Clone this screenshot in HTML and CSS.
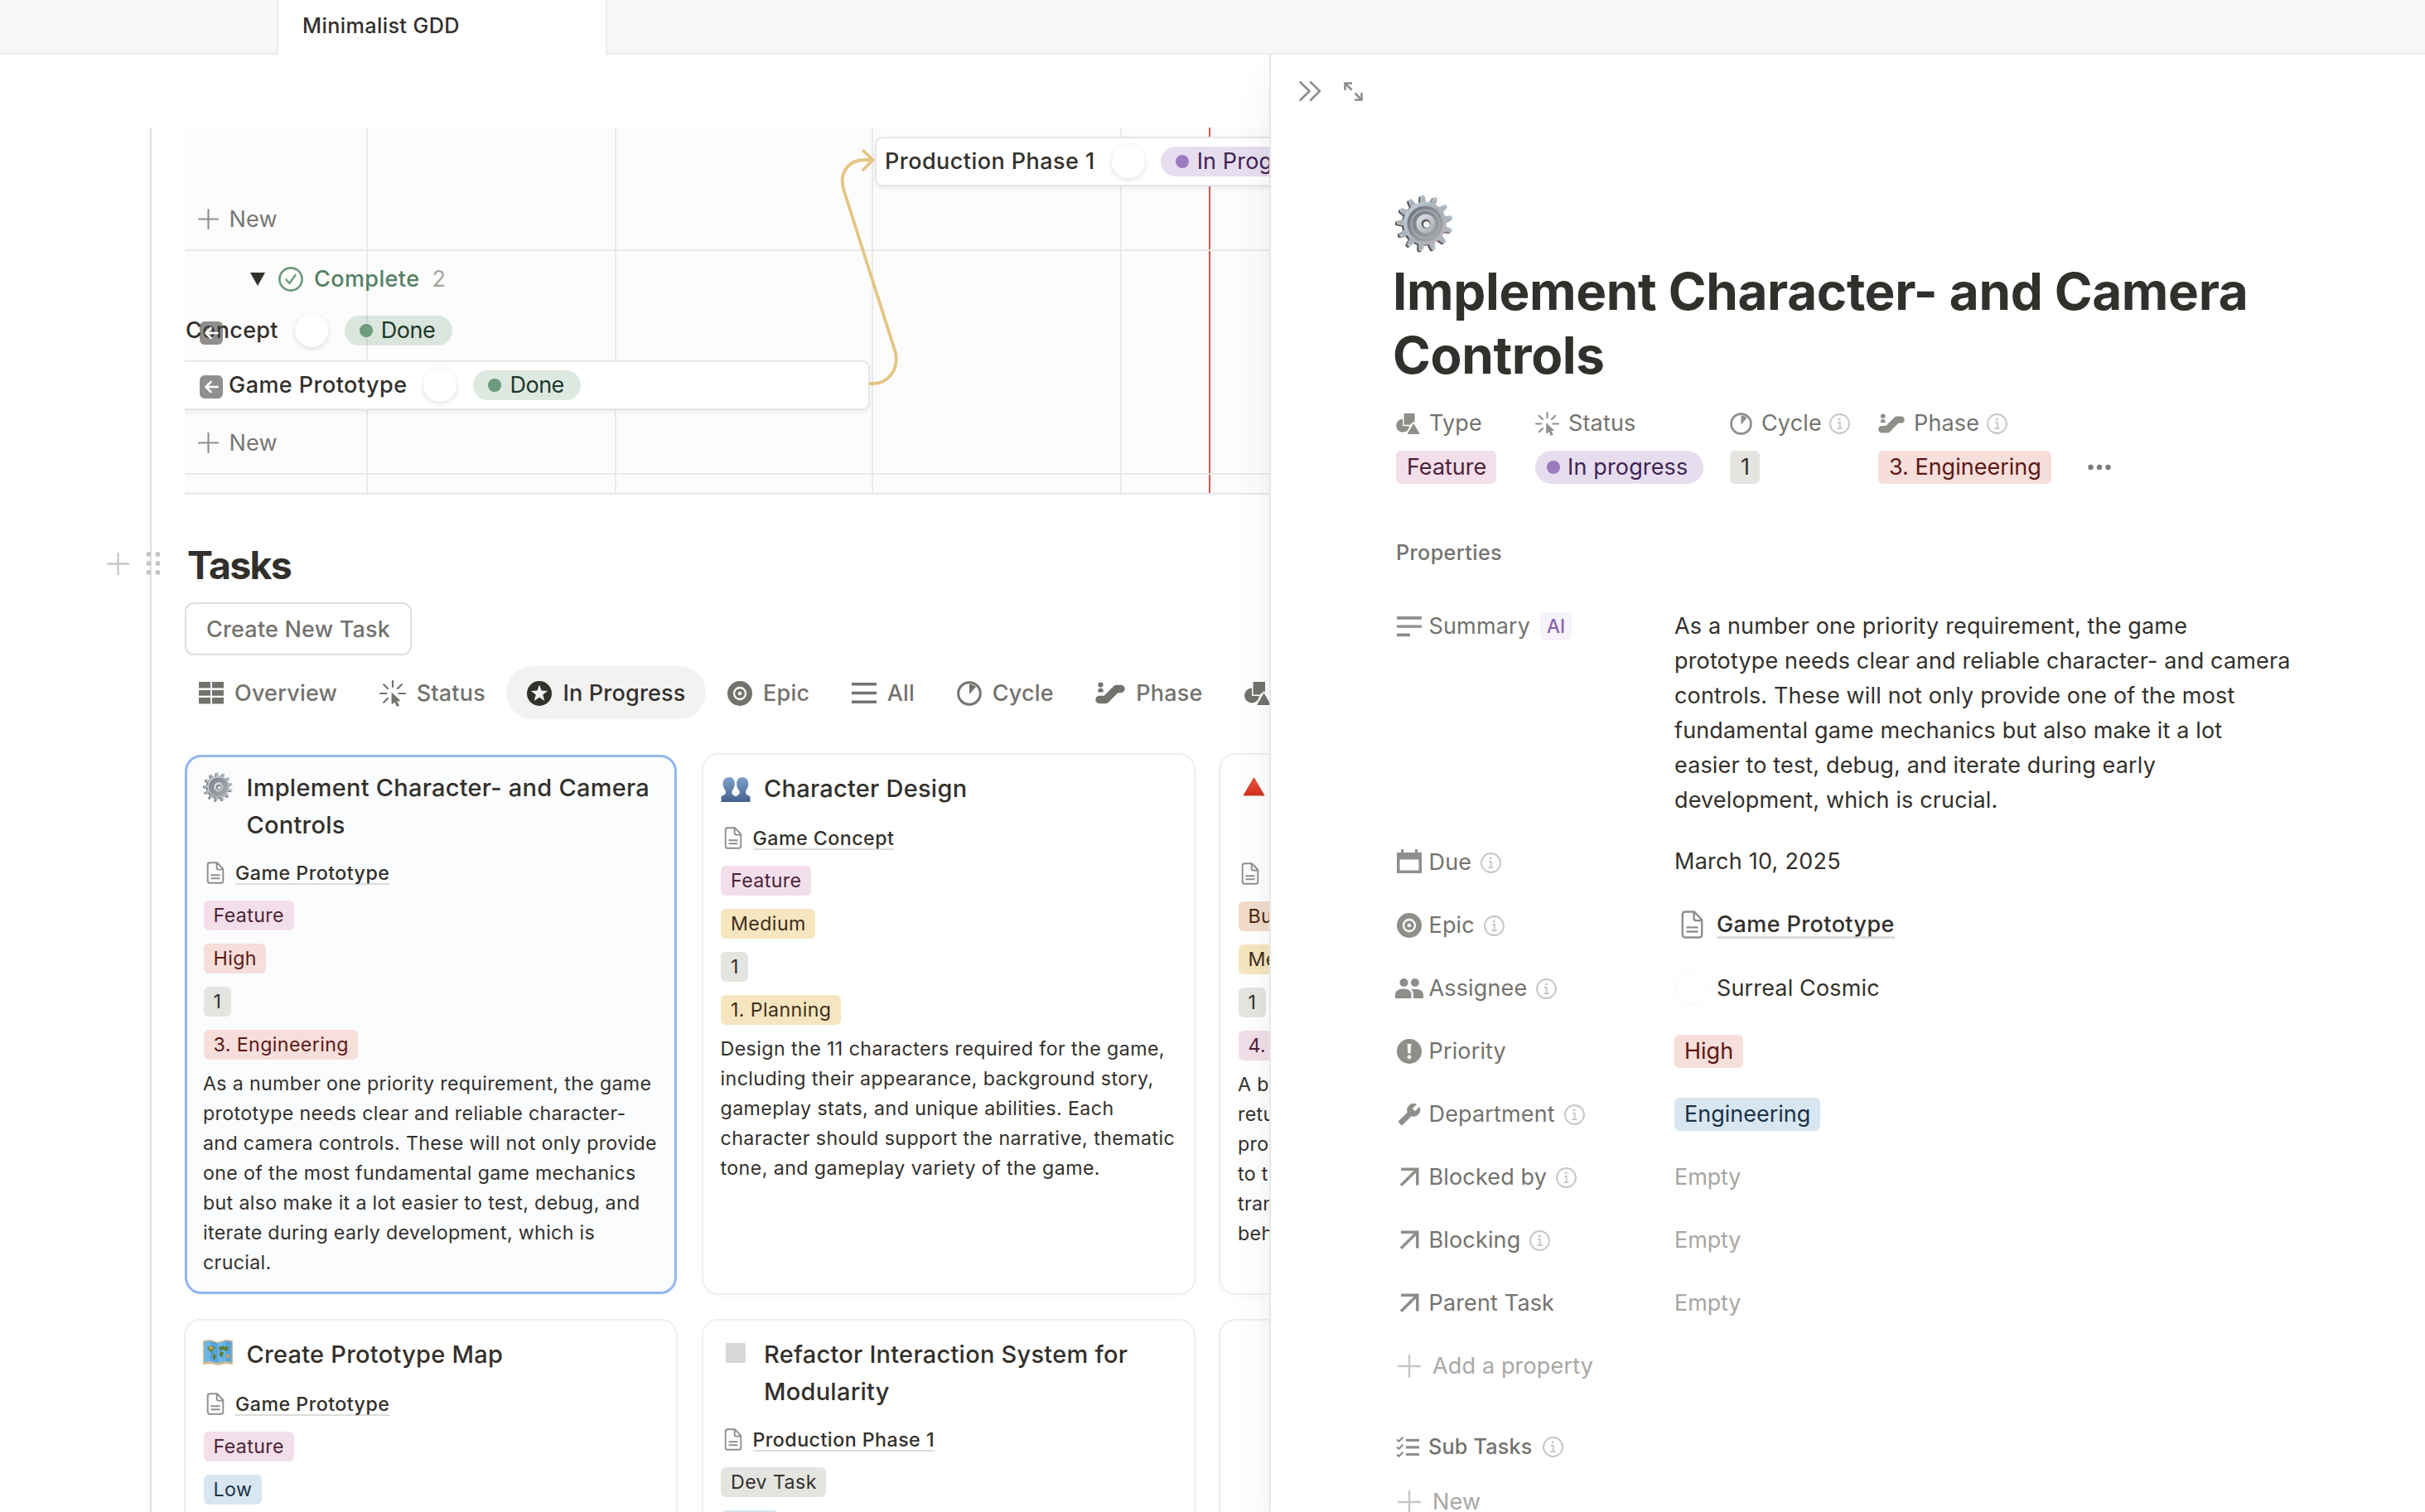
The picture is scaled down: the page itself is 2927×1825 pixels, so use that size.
FILE: index.html
```html
<!DOCTYPE html>
<html lang="en">
<head>
<meta charset="utf-8">
<title>Minimalist GDD</title>
<link rel="stylesheet" href="styles.css">
</head>
<body>
<svg class="sprite" aria-hidden="true">
  <defs>
    <linearGradient id="g-gear" x1="0" y1="0" x2="1" y2="1"><stop offset="0" stop-color="#c3d3e0"/><stop offset=".5" stop-color="#a9b2ba"/><stop offset="1" stop-color="#bdb4b9"/></linearGradient>
    <linearGradient id="g-ring" x1="0" y1="0" x2="1" y2="1"><stop offset="0" stop-color="#6c7178"/><stop offset="1" stop-color="#a9adb2"/></linearGradient>
    <linearGradient id="g-hub" x1="0" y1="0" x2="1" y2="1"><stop offset="0" stop-color="#e3e9ee"/><stop offset="1" stop-color="#9fa5ab"/></linearGradient>
    <linearGradient id="g-bust" x1="0" y1="0" x2="0" y2="1"><stop offset="0" stop-color="#7fa0cb"/><stop offset="1" stop-color="#44618e"/></linearGradient>
    <linearGradient id="g-tri" x1="0" y1="0" x2="0" y2="1"><stop offset="0" stop-color="#f0553c"/><stop offset="1" stop-color="#d32f1c"/></linearGradient>
    <path id="tooth" d="M31 12 L32.400 2.600 Q32.700 1 35 1 Q37.300 1 37.600 2.600 L39 12Z"/>
    <g id="teeth">
      <use href="#tooth"/><use href="#tooth" transform="rotate(27.7 35 35)"/><use href="#tooth" transform="rotate(55.4 35 35)"/><use href="#tooth" transform="rotate(83.1 35 35)"/><use href="#tooth" transform="rotate(110.8 35 35)"/><use href="#tooth" transform="rotate(138.5 35 35)"/><use href="#tooth" transform="rotate(166.2 35 35)"/><use href="#tooth" transform="rotate(193.8 35 35)"/><use href="#tooth" transform="rotate(221.5 35 35)"/><use href="#tooth" transform="rotate(249.2 35 35)"/><use href="#tooth" transform="rotate(276.9 35 35)"/><use href="#tooth" transform="rotate(304.6 35 35)"/><use href="#tooth" transform="rotate(332.3 35 35)"/>
      <circle cx="35" cy="35" r="26"/>
    </g>
  </defs>
  <symbol id="gear" viewBox="0 0 70 70">
    <use href="#teeth" fill="#5f5a58" transform="translate(-1.2 .8) rotate(-5 35 35)"/>
    <use href="#teeth" fill="url(#g-gear)" transform="translate(.8 -.4) rotate(-5 35 35)"/>
    <circle cx="36" cy="35" r="21.5" fill="url(#g-ring)"/>
    <circle cx="36.5" cy="35.500" r="17" fill="none" stroke="#a4a9af" stroke-width="2"/>
    <circle cx="37" cy="35" r="11.500" fill="url(#g-hub)"/>
    <circle cx="37" cy="35" r="5.500" fill="#665f5a"/><circle cx="38" cy="36" r="3.800" fill="#f4f5f6"/>
  </symbol>
  <symbol id="busts" viewBox="0 0 35 30"><path fill="url(#g-bust)" d="M9.500 0C14 0 16.500 3.500 16.300 8.500C16.200 12 15 14 13.500 16C12 19 13 21 16 22.500L17.500 23.500L19 22.500C22 21 23 19 21.500 16C20 14 18.800 12 18.700 8.500C18.500 3.500 21 0 25.500 0C30 0 33 3.500 32.800 8.500C32.700 12 31.500 14 30 16C28.500 19 30 21.500 35 23V30H0V23C5 21.500 6.500 19 5 16C3.500 14 2.300 12 2.200 8.500C2 3.500 5 0 9.500 0Z"/></symbol>
  <symbol id="redtri" viewBox="0 0 27 23"><path d="M13.500 1L26 22H1Z" fill="url(#g-tri)" stroke="#c93a2a" stroke-width="1" stroke-linejoin="round"/></symbol>
  <symbol id="map" viewBox="0 0 36 31">
    <path d="M0 1L9 0L18 3L27 0L36 1V30L27 29L18 31L9 29L0 30Z" fill="#cdbb92"/>
    <path d="M1.500 2.500L9 1.500L18 4.500L27 1.500L34.500 2.500V27L27 26L18 28L9 26L1.500 27Z" fill="#6bb6e8"/>
    <path d="M9 1.500L18 4.500V28L9 26ZM27 1.500L34.500 2.500V27L27 26Z" fill="#4590cd" opacity=".5"/>
    <path d="M5 9L10 7.500L15 9L13 12L11 13.500L12 16L9 15L6 11ZM12 17L16 19L14 25L12 22ZM19 9L24 7.500L31 9L30 13L27 14L25 12L20 13ZM20 14L25 15L23 22L20 19Z" fill="#5d7f3a"/>
    <circle cx="30" cy="20" r="2" fill="#e6a23c"/><path d="M7 8.500h5v3H8z" fill="#d8b14a"/>
  </symbol>
  <symbol id="graysq" viewBox="0 0 24 24"><rect width="24" height="24" rx="1.500" fill="#d8d8d8"/></symbol>
  <symbol id="table" viewBox="0 0 30 27"><path fill="currentColor" d="M0 0h14v7.600H0zM16 0h14v7.600H16zM0 9.900h14v6.800H0zM16 9.900h14v6.800H16zM0 19h14v7.600H0zM16 19h14v7.600H16z"/></symbol>
  <symbol id="status" viewBox="0 0 32 32">
    <path d="M16 1v7M1 16h7.500M23.500 16H31M5.200 5.200l4.800 4.800M26.800 5.200L22 10M5.200 26.800L10 22" stroke="currentColor" stroke-width="2.200" fill="none" stroke-linecap="round"/>
    <path fill="currentColor" d="M14.600 14.500L25.500 25L21.300 25.400L24 30.500L21 32L18.500 26.800L14.600 29.500Z"/>
  </symbol>
  <symbol id="star" viewBox="0 0 30 30"><circle cx="15" cy="15" r="15" fill="currentColor"/><path fill="#f2f2f1" d="M15 4.500L17.600 11.600L25.200 11.900L19.200 16.600L21.300 23.900L15 19.700L8.700 23.900L10.800 16.600L4.800 11.900L12.400 11.600Z"/></symbol>
  <symbol id="epic" viewBox="0 0 30 30"><circle cx="15" cy="15" r="15" fill="currentColor"/><circle cx="15" cy="15" r="7" fill="none" stroke="#fff" stroke-width="2.300"/><circle cx="15" cy="15" r="2.300" fill="#fff"/></symbol>
  <symbol id="lines" viewBox="0 0 30 25"><path fill="currentColor" d="M0 0h30v3.400H0zM0 10.800h30v3.400H0zM0 21.600h30V25H0z"/></symbol>
  <symbol id="cycle" viewBox="0 0 30 30"><circle cx="15" cy="15" r="13.300" fill="none" stroke="currentColor" stroke-width="3"/><path fill="currentColor" d="M15 16V3.500Q20 4 23 7Z"/></symbol>
  <symbol id="phase" viewBox="0 0 36 28"><circle cx="6.500" cy="3.500" r="3.100" fill="currentColor"/><path fill="currentColor" d="M3.300 12.500V11a3.200 3.200 0 0 1 6.400 0v1.500z"/><path d="M5 21.500H12.500L25.500 8.500H31" stroke="currentColor" stroke-width="9.500" stroke-linecap="round" stroke-linejoin="round" fill="none"/></symbol>
  <symbol id="shapes" viewBox="0 0 32 28"><circle cx="9" cy="16.500" r="9" fill="currentColor"/><path fill="#fff" d="M9 0H27V17H9ZM13 28L23.500 9L34 28Z"/><path fill="currentColor" d="M10.500 0H25V12.200L23.600 11.200L18.700 15.500H10.500ZM23.500 13.500L31.500 27Q31.800 28 31 28H16Q15.200 28 15.500 27Z"/></symbol>
  <symbol id="doc" viewBox="0 0 21 27"><path d="M4 1.200H12.500L19.800 9V23.300Q19.800 25.800 17.300 25.800H4Q1.200 25.800 1.200 23.300V3.700Q1.200 1.200 4 1.200ZM12.200 1.500V7.500Q12.200 9.600 14.200 9.600H19.500M5.800 16.200H15.200M5.800 20.300H15.200" fill="none" stroke="currentColor" stroke-width="1.900" stroke-linejoin="round" stroke-linecap="round"/></symbol>
  <symbol id="plus" viewBox="0 0 26 26"><path d="M13 1v24M1 13h24" stroke="currentColor" stroke-width="2.200" stroke-linecap="round"/></symbol>
  <symbol id="info" viewBox="0 0 24 24"><circle cx="12" cy="12" r="11" fill="none" stroke="currentColor" stroke-width="1.800"/><circle cx="11.800" cy="6.700" r="1.400" fill="currentColor"/><path d="M9.500 10.500h2.800V17M9 17.300h6" stroke="currentColor" stroke-width="1.700" fill="none"/></symbol>
  <symbol id="text" viewBox="0 0 30 25"><path fill="currentColor" d="M0 0h30v3.800H0zM0 10.400h30v3.400H0zM0 20.400h16v3.800H0z"/></symbol>
  <symbol id="cal" viewBox="0 0 30 29"><path fill="currentColor" fill-rule="evenodd" d="M5 0h3v4h14V0h3v4h5v25H0V4h5zM3.500 12.500v13h23v-13z"/></symbol>
  <symbol id="people" viewBox="0 0 34 24"><path fill="currentColor" d="M10.500 0a5 5 0 1 1 0 10a5 5 0 1 1 0-10M24 0a5 5 0 1 1 0 10a5 5 0 1 1 0-10M0 24V20Q0 12.500 10 12.500T19.500 20V24ZM22 24V19.500Q21.800 15.500 19.500 13Q34 11.500 34 20V24Z"/></symbol>
  <symbol id="alert" viewBox="0 0 30 30"><circle cx="15" cy="15" r="15" fill="currentColor"/><path fill="#fff" d="M12.700 6h4.600l-.7 11.500h-3.200zM15 19.500a2.400 2.400 0 1 1 0 4.800a2.400 2.400 0 1 1 0-4.800"/></symbol>
  <symbol id="wrench" viewBox="0 0 24 24"><path fill="currentColor" transform="matrix(-1 0 0 1 24 0)" stroke="currentColor" stroke-width=".8" stroke-linejoin="round" d="M22.700 19l-9.100-9.100c.9-2.300.4-5-1.500-6.900-2-2-5-2.400-7.400-1.300L9 6 6 9 1.600 4.700C.4 7.100.9 10.100 2.900 12.100c1.900 1.900 4.600 2.400 6.900 1.500l9.100 9.100c.4.400 1 .4 1.400 0l2.300-2.300c.5-.4.5-1.100.1-1.400z"/></symbol>
  <symbol id="arrow" viewBox="0 0 24 24"><path d="M2 2.200H21.800V21.500M21 3L2 21.800" fill="none" stroke="currentColor" stroke-width="3.600"/></symbol>
  <symbol id="checks" viewBox="0 0 28 25"><path d="M1 3.500l2.500 2.300L8.500 .8M1 12.500l2.500 2.300L8.500 9.800M1 21.500l2.500 2.300L8.500 18.800" fill="none" stroke="currentColor" stroke-width="2.200"/><path d="M12 4.300h16M12 12.800h16M12 21.500h16" stroke="currentColor" stroke-width="3.200"/></symbol>
  <symbol id="back" viewBox="0 0 28 28"><path d="M21.500 14H7.500M13.500 8L7.500 14L13.500 20" stroke="#fff" stroke-width="2.600" fill="none" stroke-linecap="round" stroke-linejoin="round"/></symbol>
</svg>

<header class="topbar">
  <div class="topbar-start"></div>
  <div class="topbar-tab">Minimalist GDD</div>
  <div class="topbar-end"></div>
</header>

<div class="workspace">
  <main class="page">
    <div class="column">
      <section class="timeline">
        <div class="gridline gl-1"></div><div class="gridline gl-2"></div><div class="gridline gl-3"></div><div class="gridline gl-4"></div>
        <div class="gridline today"></div>
        <div class="lane lane-first">
          <div class="track"></div>
          <div class="new-row"><svg class="i-plus"><use href="#plus"/></svg>New</div>
        </div>
        <div class="lane">
          <div class="lane-head">
            <svg class="i-toggle" viewBox="0 0 18 16"><path d="M0 0H18L9 16Z" fill="#32302c"/></svg>
            <svg class="i-check" viewBox="0 0 30 30"><circle cx="15" cy="15" r="13.600" fill="none" stroke="#6c9b7d" stroke-width="2.700"/><path d="M9.500 15.500L13.500 20L20.500 10" fill="none" stroke="#6c9b7d" stroke-width="2.400" stroke-linecap="round" stroke-linejoin="round"/></svg>
            <span class="lane-name">Complete</span><span class="lane-count">2</span>
          </div>
          <div class="track track-two"></div>
          <div class="new-row"><svg class="i-plus"><use href="#plus"/></svg>New</div>
        </div>
        <div class="lane-tail"></div>

        <div class="bar bar-production"><span class="bar-name">Production Phase 1</span><i class="avatar"></i><span class="pill purple"><i></i>In Progress</span></div>
        <div class="bar bar-concept"><span class="bar-name">Concept</span><i class="avatar"></i><span class="pill green"><i></i>Done</span><span class="jump"><svg><use href="#back"/></svg></span></div>
        <div class="bar bar-prototype"><span class="bar-name">Game Prototype</span><i class="avatar"></i><span class="pill green"><i></i>Done</span><span class="jump"><svg><use href="#back"/></svg></span></div>
        <svg class="link-arrow" viewBox="0 0 80 300"><path d="M38 289H43C60 289 74 273 70 252L8 57C1 37 11 19 33 19H42M30 7L42.500 19L30 32" fill="none" stroke="#e5c585" stroke-width="3.800"/></svg>
      </section>

      <div class="heading-row">
        <div class="handle"><svg class="i-add"><use href="#plus"/></svg><svg class="i-drag" viewBox="0 0 18 28"><g fill="#c6c5c1"><circle cx="3.500" cy="3" r="2.900"/><circle cx="14.500" cy="3" r="2.900"/><circle cx="3.500" cy="14" r="2.900"/><circle cx="14.500" cy="14" r="2.900"/><circle cx="3.500" cy="25" r="2.900"/><circle cx="14.500" cy="25" r="2.900"/></g></svg></div>
        <h2>Tasks</h2>
      </div>
      <button class="create">Create New Task</button>

      <nav class="tabs">
        <a class="tab"><svg class="w30 h27"><use href="#table"/></svg>Overview</a>
        <a class="tab"><svg class="w32 h32"><use href="#status"/></svg>Status</a>
        <a class="tab active"><svg class="w30 h30"><use href="#star"/></svg>In Progress</a>
        <a class="tab"><svg class="w30 h30"><use href="#epic"/></svg>Epic</a>
        <a class="tab"><svg class="w30 h25"><use href="#lines"/></svg>All</a>
        <a class="tab"><svg class="w30 h30"><use href="#cycle"/></svg>Cycle</a>
        <a class="tab"><svg class="w36 h28"><use href="#phase"/></svg>Phase</a>
        <a class="tab"><svg class="w32 h28"><use href="#shapes"/></svg></a>
      </nav>

      <section class="gallery">
        <article class="card selected">
          <h3><svg class="e35"><use href="#gear"/></svg><span>Implement Character- and Camera Controls</span></h3>
          <div class="ref"><svg><use href="#doc"/></svg><a>Game Prototype</a></div>
          <span class="tag pink">Feature</span><span class="tag red">High</span><span class="tag gray">1</span><span class="tag red">3. Engineering</span>
          <p>As a number one priority requirement, the game<br>prototype needs clear and reliable character-<br>and camera controls. These will not only provide<br>one of the most fundamental game mechanics<br>but also make it a lot easier to test, debug, and<br>iterate during early development, which is<br>crucial.</p>
        </article>
        <article class="card">
          <h3><svg class="e-bust"><use href="#busts"/></svg><span>Character Design</span></h3>
          <div class="ref"><svg><use href="#doc"/></svg><a>Game Concept</a></div>
          <span class="tag pink">Feature</span><span class="tag yellow">Medium</span><span class="tag gray">1</span><span class="tag yellow">1. Planning</span>
          <p class="p-wide">Design the 11 characters required for the game,<br>including their appearance, background story,<br>gameplay stats, and unique abilities. Each<br>character should support the narrative, thematic<br>tone, and gameplay variety of the game.</p>
        </article>
        <article class="card tall">
          <h3><svg class="e-tri"><use href="#redtri"/></svg></h3>
          <div class="ref"><svg><use href="#doc"/></svg></div>
          <span class="tag orange">Bug</span><span class="tag yellow">Medium</span><span class="tag gray">1</span><span class="tag pink">4. Testing</span>
          <p>A b<br>retu<br>pro<br>to t<br>tran<br>beh</p>
        </article>
        <article class="card">
          <h3><svg class="e-map"><use href="#map"/></svg><span>Create Prototype Map</span></h3>
          <div class="ref"><svg><use href="#doc"/></svg><a>Game Prototype</a></div>
          <span class="tag pink">Feature</span><span class="tag blue">Low</span>
        </article>
        <article class="card">
          <h3><svg class="e-sq"><use href="#graysq"/></svg><span>Refactor Interaction System for Modularity</span></h3>
          <div class="ref"><svg><use href="#doc"/></svg><a>Production Phase 1</a></div>
          <span class="tag gray">Dev Task</span><span class="tag blue">Low</span>
        </article>
        <article class="card"></article>
      </section>
    </div>
  </main>

  <aside class="peek">
    <div class="peek-bar">
      <svg class="i-close" viewBox="0 0 27 24"><path d="M1.500 1.200L12.500 12L1.500 22.800M14 1.200L25 12L14 22.800" fill="none" stroke="#8f8e8b" stroke-width="2.600" stroke-linecap="round" stroke-linejoin="round"/></svg>
      <svg class="i-expand" viewBox="0 0 23 23"><path d="M10 1.500H1.500V10M1.500 1.500L9.500 9.500M13 21.500H21.500V13M21.500 21.500L13.500 13.500" fill="none" stroke="#8f8e8b" stroke-width="2.600"/></svg>
    </div>
    <div class="peek-body">
      <svg class="page-icon"><use href="#gear"/></svg>
      <h1>Implement Character- and Camera Controls</h1>

      <div class="pinned">
        <div class="pin"><div class="pin-label"><svg class="w29 h25"><use href="#shapes"/></svg><span>Type</span></div><div><span class="chip pink">Feature</span></div></div>
        <div class="pin"><div class="pin-label"><svg class="w29 h29"><use href="#status"/></svg><span>Status</span></div><div><span class="pill purple big"><i></i>In progress</span></div></div>
        <div class="pin"><div class="pin-label"><svg class="w27 h27"><use href="#cycle"/></svg><span>Cycle</span><svg class="i-info"><use href="#info"/></svg></div><div><span class="chip gray">1</span></div></div>
        <div class="pin"><div class="pin-label"><svg class="w32 h25"><use href="#phase"/></svg><span>Phase</span><svg class="i-info"><use href="#info"/></svg></div><div><span class="chip red">3. Engineering</span><svg class="i-more" viewBox="0 0 28 8"><g fill="#7d7c78"><circle cx="3.500" cy="4" r="3.200"/><circle cx="14" cy="4" r="3.200"/><circle cx="24.500" cy="4" r="3.200"/></g></svg></div></div>
      </div>

      <div class="section-label">Properties</div>

      <div class="prop prop-summary">
        <div class="name"><i><svg class="w30 h25"><use href="#text"/></svg></i>Summary<b class="ai">AI</b></div>
        <div class="value">As a number one priority requirement, the game<br>prototype needs clear and reliable character- and camera<br>controls. These will not only provide one of the most<br>fundamental game mechanics but also make it a lot<br>easier to test, debug, and iterate during early<br>development, which is crucial.</div>
      </div>
      <div class="prop"><div class="name"><i><svg class="w30 h29 i-cal"><use href="#cal"/></svg></i>Due<svg class="i-info"><use href="#info"/></svg></div><div class="value value-date">March 10, 2025</div></div>
      <div class="prop"><div class="name"><i><svg class="w30 h30"><use href="#epic"/></svg></i>Epic<svg class="i-info"><use href="#info"/></svg></div><div class="value value-ref"><svg class="i-page"><use href="#doc"/></svg><a>Game Prototype</a></div></div>
      <div class="prop"><div class="name"><i><svg class="w34 h24"><use href="#people"/></svg></i>Assignee<svg class="i-info"><use href="#info"/></svg></div><div class="value"><em class="person"></em>Surreal Cosmic</div></div>
      <div class="prop"><div class="name"><i><svg class="w30 h30"><use href="#alert"/></svg></i>Priority</div><div class="value"><span class="chip red">High</span></div></div>
      <div class="prop"><div class="name"><i><svg class="w28 h28"><use href="#wrench"/></svg></i>Department<svg class="i-info"><use href="#info"/></svg></div><div class="value"><span class="chip blue">Engineering</span></div></div>
      <div class="prop"><div class="name"><i><svg class="w24 h24"><use href="#arrow"/></svg></i>Blocked by<svg class="i-info"><use href="#info"/></svg></div><div class="value empty">Empty</div></div>
      <div class="prop"><div class="name"><i><svg class="w24 h24"><use href="#arrow"/></svg></i>Blocking<svg class="i-info"><use href="#info"/></svg></div><div class="value empty">Empty</div></div>
      <div class="prop"><div class="name"><i><svg class="w24 h24"><use href="#arrow"/></svg></i>Parent Task</div><div class="value empty">Empty</div></div>
      <div class="add"><svg class="i-faint"><use href="#plus"/></svg>Add a property</div>
      <div class="sub-tasks"><i><svg class="w28 h25"><use href="#checks"/></svg></i>Sub Tasks<svg class="i-info"><use href="#info"/></svg></div>
      <div class="add add-sub"><svg class="i-faint"><use href="#plus"/></svg>New</div>
    </div>
  </aside>
</div>
</body>
</html>
```
FILE: styles.css
```css
* { box-sizing: border-box; }
html, body { margin: 0; height: 100%; overflow: hidden; }
body {
  display: flex;
  flex-direction: column;
  background: #fff;
  color: #32302c;
  font: 400 27px/36px Inter, "Liberation Sans", sans-serif;
  letter-spacing: .15px;
}
i, em { font-style: normal; }
svg { display: block; flex: none; overflow: visible; }
.sprite { position: absolute; width: 0; height: 0; }

.w24 { width: 24px; } .w27 { width: 27px; } .w28 { width: 28px; } .w29 { width: 29px; } .w30 { width: 30px; }
.w32 { width: 32px; } .w34 { width: 34px; } .w36 { width: 36px; }
.h24 { height: 24px; } .h25 { height: 25px; } .h27 { height: 27px; } .h28 { height: 28px; } .h29 { height: 29px; }
.h30 { height: 30px; } .h32 { height: 32px; }

/* Top bar */
.topbar { display: flex; height: 66px; flex: none; position: relative; z-index: 3; }
.topbar-start { width: 334px; }
.topbar-end { flex: 1; }
.topbar-start, .topbar-end { background: #f8f8f7; border-bottom: 2px solid #ececea; }
.topbar-tab {
  width: 399px;
  padding-left: 29px;
  border: solid #ececea;
  border-width: 0 2px;
  background: #fff;
  font-size: 25.2px;
  font-weight: 450;
  line-height: 62px;
  letter-spacing: .4px;
}

.workspace { display: flex; flex: 1; min-height: 0; }
.page { width: 1532px; flex: none; overflow: hidden; padding: 88px 0 0 181px; }
.column { width: 2000px; min-height: 1700px; border-left: 2px solid #dededc; padding-left: 40px; }

/* Timeline */
.timeline { position: relative; height: 443px; background: #fcfcfc; border-bottom: 2px solid #e8e8e7; }
.gridline { position: absolute; top: 0; bottom: 0; width: 2px; background: #e9e9e8; }
.gl-1 { left: 219px; } .gl-2 { left: 519px; } .gl-3 { left: 829px; } .gl-4 { left: 1129px; }
.today { left: 1235.500px; width: 2.500px; background: #cd5c54; }
.lane { position: relative; border-bottom: 2px solid #e8e8e7; }
.track { height: 74px; }
.track-two { height: 129px; }
.new-row { display: flex; align-items: center; gap: 13px; height: 73px; padding-left: 15.500px; color: #787774; }
.i-plus { width: 25px; height: 25px; color: #8f8e8b; }
.lane-head { display: flex; align-items: center; height: 67px; margin-bottom: -1px; padding-left: 79px; font-weight: 500; }
.i-toggle { width: 18px; height: 16px; margin-right: 16px; }
.i-check { width: 30px; height: 30px; margin-right: 13px; }
.lane-name { color: #548164; letter-spacing: .4px; margin-right: 15px; }
.lane-count { color: #a5a4a1; font-weight: 400; }
.bar { position: absolute; display: flex; align-items: center; font-weight: 500; white-space: nowrap; height: 60px; }
.bar-production { left: 833px; top: 11px; width: 900px; padding-left: 10px; }
.bar-concept { left: 1px; top: 214.500px; }
.bar-prototype { left: -10px; top: 280.500px; width: 837px; padding-left: 61px; clip-path: inset(-2px -10px -10px 10px); }
.bar-production, .bar-prototype { background: #fff; border: 2px solid #e6e6e5; border-radius: 9px; box-shadow: 0 3px 5px rgba(0,0,0,.06); }
.bar-name { letter-spacing: .45px; }
.bar-concept .bar-name { letter-spacing: .3px; }
.avatar { width: 40px; height: 40px; margin: 0 20px; border-radius: 50%; background: #fff; box-shadow: 0 2px 6px rgba(0,0,0,.13); }
.pill { display: flex; align-items: center; height: 36px; width: 130px; padding-left: 18px; border-radius: 18px; font-weight: 400; letter-spacing: -.5px; }
.pill i { width: 16px; height: 16px; margin-right: 10px; border-radius: 50%; }
.pill.green { background: rgba(108,155,125,.23); color: #1c3829; }
.pill.green i { background: #6c9b7d; }
.pill.purple { background: #e6deee; color: #412454; letter-spacing: .15px; }
.bar .pill.purple { width: 204px; margin-left: -1px; }
.pill.purple i { background: #9d7bbf; }
.pill.big { display: inline-flex; width: 203px; height: 40px; border-radius: 20px; padding-left: 14px; }
.pill.big i { margin-right: 9px; }
.jump { position: absolute; width: 28px; height: 28px; left: 17px; top: 19px; border-radius: 6px; background: rgba(70,68,66,.6); }
.bar-prototype .jump { left: 26px; top: 16px; }
.jump svg { width: 28px; height: 28px; }
.link-arrow { position: absolute; left: 788px; top: 20px; width: 80px; height: 300px; }

/* Tasks heading */
.heading-row { position: relative; margin-top: 55px; }
h2 { margin: 0; padding-left: 3px; font-size: 46.500px; line-height: 60px; font-weight: 650; letter-spacing: -1.7px; }
.handle { position: absolute; left: -94px; top: 14px; display: flex; align-items: center; gap: 20px; }
.i-add { width: 27px; height: 27px; color: #c6c5c1; }
.i-drag { width: 18px; height: 28px; }
.create {
  display: block;
  margin: 15px 0 0;
  width: 274px;
  height: 64px;
  padding: 0;
  border: 2px solid #dededc;
  border-radius: 11px;
  background: #fff;
  color: #73726e;
  font: 500 27px Inter, "Liberation Sans", sans-serif;
  letter-spacing: .2px;
}

.tabs { display: flex; gap: 1.500px; margin: 13px 0 0 -8px; }
.tab { display: flex; align-items: center; gap: 13px; height: 64px; padding: 1px 24px 0 25px; border-radius: 32px; color: #73726e; font-weight: 500; letter-spacing: .2px; }
.tab.active { background: #f2f2f1; color: #32302c; }

/* Gallery */
.gallery { display: grid; grid-template-columns: repeat(3, 596px); gap: 29px 28.500px; margin: 41px 0 0 -1px; }
.card { border: 2px solid #efefee; border-radius: 20px; padding: 17px 21px 19px; background: #fff; box-shadow: 0 3px 6px rgba(0,0,0,.02); min-height: 400px; }
.card.selected { margin: 1.500px 1px 1px; border: 3px solid #92b7ef; background: #fbfcfe; padding: 14.500px 19px 17px; }
.card h3 { display: flex; align-items: flex-start; min-height: 48px; margin: 0 0 17px; padding-top: 1px; font-size: 29px; line-height: 45px; font-weight: 500; letter-spacing: .25px; }
.card h3 span { width: 500px; margin-left: 16.500px; }
.card.selected h3 { padding-top: 0; }
.card.tall h3 { min-height: 91px; }
.e35 { width: 36px; height: 36px; margin-top: 4px; }
.e-bust { width: 36px; height: 30px; margin-top: 9px; }
.e-tri { width: 27px; height: 23px; margin: 9px 0 0 6px; }
.e-map { width: 36px; height: 31px; margin-top: 5px; }
.e-sq { width: 24px; height: 24px; margin: 9px 6px; }
.ref { display: flex; align-items: center; gap: 13px; height: 36px; margin-bottom: 16px; padding-left: 4px; }
.ref svg { width: 22px; height: 27px; color: #8f8e8b; }
.ref a { height: 29px; border-bottom: 2px solid #dcdcda; font-size: 23.200px; line-height: 30px; font-weight: 500; letter-spacing: .48px; }
.tag { display: block; width: max-content; height: 36px; margin-bottom: 16px; margin-left: .5px; padding: 0 11.500px 0 12px; border-radius: 6px; font-size: 23.200px; line-height: 37px; letter-spacing: .4px; }
.card p { margin: -5px 0 0; font-size: 23.200px; line-height: 36px; letter-spacing: .34px; white-space: nowrap; }
.card p.p-wide { letter-spacing: .42px; }

.pink { background: #f2dfea; color: #4c2337; }
.red { background: #f6deda; color: #5d1715; }
.gray { background: #e4e4e0; color: #32302c; }
.yellow { background: #f5e6bf; color: #402c1b; }
.orange { background: #f2dccb; color: #49290e; }
.blue { background: #d8e6f1; color: #183347; }

/* Side peek */
.peek { position: relative; z-index: 2; flex: 1; background: #fff; border-left: 2px solid #e6e6e5; box-shadow: 0 30px 44px rgba(0,0,0,.07); }
.peek-bar { display: flex; align-items: center; gap: 27px; height: 88px; padding-left: 34px; }
.i-close { width: 27px; height: 24px; }
.i-expand { width: 23px; height: 23px; }
.peek-body { padding: 81px 0 0 152px; }
.page-icon { width: 70px; height: 70px; margin-left: -2px; }
h1 { width: 1100px; margin: 8px 0 23px -5px; font-size: 62px; line-height: 77px; font-weight: 700; letter-spacing: -.36px; }
.pinned { display: flex; margin-left: -1px; }
.pin-label { display: flex; align-items: center; height: 42px; margin-bottom: 12px; color: #73726e; }
.pin-label > svg:first-child { color: #8f8e8b; margin-right: 11px; }
.pin > div:last-child { display: flex; align-items: center; height: 40px; }
.pin:nth-child(1) { width: 168px; } .pin:nth-child(2) { width: 235px; } .pin:nth-child(3) { width: 179px; }
.pin-label .i-info { margin-left: 9px; }
.chip { display: inline-block; height: 40px; padding: 0 12px 0 13px; border-radius: 6px; line-height: 40px; letter-spacing: 0; }
.i-more { width: 28px; height: 8px; margin-left: 44px; }
.i-info { width: 25px; height: 25px; margin-left: 12px; color: #c6c5c1; }
.section-label { height: 34px; margin: 66px 0 51px -1px; color: #73726e; font-size: 25.200px; line-height: 34px; font-weight: 500; letter-spacing: .35px; }
.prop { display: grid; grid-template-columns: 335px 1fr; height: 76px; align-items: center; }
.prop-summary { height: 268px; align-items: start; line-height: 42px; }
.name, .sub-tasks { display: flex; align-items: center; color: #73726e; }
.name > i, .sub-tasks > i { display: flex; justify-content: center; width: 30px; margin-right: 8.500px; color: #8f8e8b; }
.name .i-info { margin-left: 11px; }
.i-cal { margin-top: -4px; }
.ai { width: 38px; height: 34px; margin-left: 12px; border-radius: 7px; background: #f6f2f9; color: #8a5fb0; font-size: 22.500px; font-weight: 500; line-height: 34px; text-align: center; }
.value { display: flex; align-items: center; white-space: nowrap; }
.prop-summary .value { display: block; }
.value-date { margin-top: -2px; letter-spacing: .25px; }
.value-ref { margin-top: -3px; }
.value .chip { padding-left: 12px; }
.value a { height: 35px; border-bottom: 3px solid #dcdcda; font-weight: 500; line-height: 35px; letter-spacing: .4px; }
.i-page { width: 27px; height: 34px; margin: 0 16px 0 8px; color: #8f8e8b; }
.person { width: 40px; height: 40px; margin: 0 11px 0 0; border: 2px solid #fafafa; border-radius: 50%; }
.empty { color: #a8a7a4; letter-spacing: -.1px; }
.add { display: flex; align-items: center; gap: 14px; height: 76px; padding-left: 1px; color: #a8a7a4; }
.i-faint { width: 28px; height: 28px; color: #c6c5c1; }
.sub-tasks { height: 76px; margin-top: 21px; font-size: 25.200px; font-weight: 500; letter-spacing: .2px; }
.sub-tasks > i { margin-left: -2px; margin-right: 10px; }
.add-sub { height: 58px; }
```
